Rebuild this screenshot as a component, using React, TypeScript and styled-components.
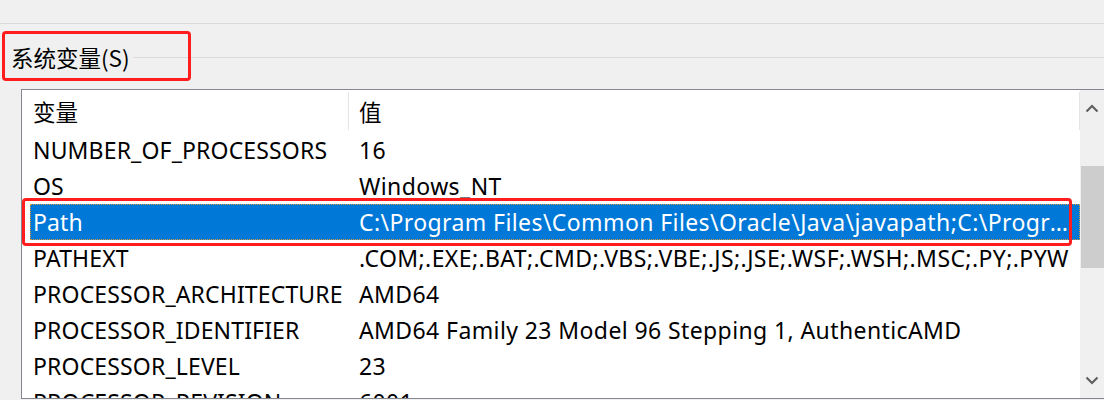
import React from "react";
import styled, { createGlobalStyle } from "styled-components";

const Global = createGlobalStyle`
  html, body { margin: 0; padding: 0; background: #f0f0f0; }
  body { font-family: "Noto Sans", "Noto Sans CJK SC", sans-serif; }
`;

const Page = styled.div`
  width: 1104px;
  height: 400px;
  overflow: hidden;
  background: #f0f0f0;
  display: flex;
  flex-direction: column;
`;

const TopStrip = styled.div`
  height: 23px;
  border-bottom: 1px solid #dadada;
  flex: none;
`;

const GroupHeader = styled.div`
  height: 65px;
  display: flex;
  align-items: center;
  padding-left: 11px;
  gap: 3px;
  flex: none;
`;

const Highlight = styled.div<{ $inset: string }>`
  position: relative;
  &::after {
    content: "";
    position: absolute;
    inset: ${(p) => p.$inset};
    border: 3px solid #ff1d1d;
    border-radius: 4px;
    pointer-events: none;
    z-index: 2;
  }
`;

const GroupLabel = styled.span`
  font-size: 22.5px;
  color: #000;
  line-height: 30px;
  display: block;
  font-family: "Noto Sans CJK SC", "Noto Sans", sans-serif;
`;

const GroupLine = styled.div`
  flex: 1;
  height: 1px;
  background: #dcdcdc;
  margin-top: 2px;
`;

const ListBox = styled.div`
  margin-left: 21px;
  width: 1100px;
  height: 308px;
  border: 1px solid #828790;
  background: #fff;
  display: grid;
  grid-template-columns: 1058px 24px;
  overflow: hidden;
  flex: none;
`;

const ListBody = styled.div`
  display: flex;
  flex-direction: column;
  overflow: hidden;
`;

const HeaderRow = styled.div`
  height: 42px;
  display: grid;
  grid-template-columns: 326px 1fr;
  flex: none;
`;

const HeaderCell = styled.div<{ $divider?: boolean }>`
  display: flex;
  align-items: center;
  padding-left: ${(p) => (p.$divider ? "10px" : "11px")};
  font-size: 22.5px;
  color: #000;
  font-family: "Noto Sans CJK SC", "Noto Sans", sans-serif;
  border-left: ${(p) => (p.$divider ? "1px solid #e5e5e5" : "none")};
  border-right: ${(p) => (p.$divider ? "1px solid #e5e5e5" : "none")};
  margin: 2px 0 2px;
`;

const Row = styled.div<{ $selected?: boolean }>`
  position: relative;
  height: 36px;
  flex: none;
  display: grid;
  grid-template-columns: 326px 1fr;
  align-items: center;
  color: ${(p) => (p.$selected ? "#fff" : "#000")};
  font-size: 23px;
  &::before {
    content: "";
    position: absolute;
    left: 8px;
    right: 0;
    top: 0;
    bottom: 0;
    background: ${(p) => (p.$selected ? "#0078d7" : "transparent")};
    outline: ${(p) => (p.$selected ? "1px dotted #d9963a" : "none")};
    outline-offset: -1px;
    z-index: 0;
  }
`;

const KeyCell = styled.div`
  position: relative;
  z-index: 1;
  padding-left: 11px;
  white-space: nowrap;
  overflow: hidden;
  letter-spacing: 0.15px;
`;

const ValueCell = styled.div`
  position: relative;
  z-index: 1;
  padding-left: 11px;
  padding-right: 6px;
  white-space: nowrap;
  overflow: hidden;
  text-overflow: ellipsis;
  letter-spacing: 0.4px;
`;

const ScrollBar = styled.div`
  background: #f0f0f0;
  display: flex;
  flex-direction: column;
  align-items: stretch;
`;

const ArrowBox = styled.div`
  height: 36px;
  display: flex;
  align-items: center;
  justify-content: center;
  flex: none;
`;

const Track = styled.div`
  flex: 1;
  padding-top: 40px;
  padding-bottom: 94px;
  display: flex;
`;

const Thumb = styled.div`
  flex: 1;
  background: #cdcdcd;
  margin-left: 1px;
`;

const Chevron = ({ up }: { up?: boolean }) => (
  <svg width="14" height="9" viewBox="0 0 14 9">
    <path
      d={up ? "M1.5 7.5 L7 2 L12.5 7.5" : "M1.5 1.5 L7 7 L12.5 1.5"}
      fill="none"
      stroke="#606060"
      strokeWidth="2.2"
    />
  </svg>
);

const rows: [string, string][] = [
  ["NUMBER_OF_PROCESSORS", "16"],
  ["OS", "Windows_NT"],
  ["Path", "C:\\Program Files\\Common Files\\Oracle\\Java\\javapath;C:\\Program Files (x86)\\Common Files"],
  ["PATHEXT", ".COM;.EXE;.BAT;.CMD;.VBS;.VBE;.JS;.JSE;.WSF;.WSH;.MSC;.PY;.PYW"],
  ["PROCESSOR_ARCHITECTURE", "AMD64"],
  ["PROCESSOR_IDENTIFIER", "AMD64 Family 23 Model 96 Stepping 1, AuthenticAMD"],
  ["PROCESSOR_LEVEL", "23"],
  ["PROCESSOR_REVISION", "6001"],
];

export default function App() {
  return (
    <Page>
      <Global />
      <TopStrip />
      <GroupHeader>
        <Highlight $inset="-11px -61px -9px -9px">
          <GroupLabel>系统变量(S)</GroupLabel>
        </Highlight>
        <GroupLine />
      </GroupHeader>
      <ListBox>
        <ListBody>
          <HeaderRow>
            <HeaderCell>变量</HeaderCell>
            <HeaderCell $divider>值</HeaderCell>
          </HeaderRow>
          {rows.map(([k, v]) => {
            const sel = k === "Path";
            const row = (
              <Row $selected={sel} key={k}>
                <KeyCell>{k}</KeyCell>
                <ValueCell>{v}</ValueCell>
              </Row>
            );
            return sel ? (
              <Highlight key={k} $inset="-6px 8px -6px 0px">
                {row}
              </Highlight>
            ) : (
              row
            );
          })}
        </ListBody>
        <ScrollBar>
          <ArrowBox>
            <Chevron up />
          </ArrowBox>
          <Track>
            <Thumb />
          </Track>
          <ArrowBox>
            <Chevron />
          </ArrowBox>
        </ScrollBar>
      </ListBox>
    </Page>
  );
}
